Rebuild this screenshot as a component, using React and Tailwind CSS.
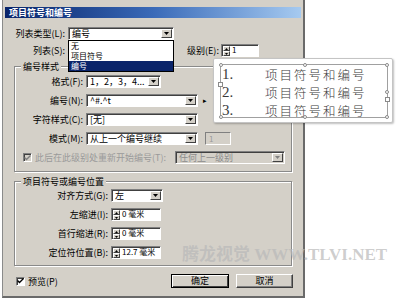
import React from 'react';

const FONT = { fontFamily: '"Noto Sans CJK SC", "Liberation Sans", sans-serif' };

function DropArrow({ disabled = false }) {
  return (
    <span className="flex w-[11px] shrink-0 items-center justify-center border border-t-white border-l-white border-r-[#404040] border-b-[#404040] bg-[#d4d0c8]">
      <svg width="5" height="3" viewBox="0 0 5 3">
        <path d="M0 0h5L2.5 3z" fill={disabled ? '#808080' : '#000'} />
      </svg>
    </span>
  );
}

function Select({ value, className = '', disabled = false }) {
  return (
    <div
      className={`flex h-[13px] items-stretch border border-t-[#808080] border-l-[#808080] border-b-white border-r-white shadow-[inset_1px_1px_0_#404040] ${
        disabled ? 'bg-[#d4d0c8] text-[#8c8c8c]' : 'bg-white text-black'
      } ${className}`}
    >
      <span className="flex-1 truncate pl-[3px] pt-[1px] text-[9px] leading-[10px]">{value}</span>
      <span className="flex py-[1px] pr-[1px]">
        <DropArrow disabled={disabled} />
      </span>
    </div>
  );
}

function SpinInput({ value, className = '' }) {
  return (
    <div
      className={`flex h-[13px] items-stretch bg-white border border-t-[#808080] border-l-[#808080] border-b-white border-r-white shadow-[inset_1px_1px_0_#404040] ${className}`}
    >
      <span className="ml-[1px] mt-[1px] flex w-[7px] flex-col bg-[#d4d0c8]">
        <span className="flex flex-1 items-center justify-center border border-t-white border-l-white border-r-[#404040] border-b-[#404040]">
          <svg width="3" height="2" viewBox="0 0 3 2"><path d="M1.5 0L3 2H0z" fill="#000" /></svg>
        </span>
        <span className="flex flex-1 items-center justify-center border border-t-white border-l-white border-r-[#404040] border-b-[#404040]">
          <svg width="3" height="2" viewBox="0 0 3 2"><path d="M0 0h3L1.5 2z" fill="#000" /></svg>
        </span>
      </span>
      <span className="flex-1 pl-[2px] text-[8px] leading-[10px] text-black">{value}</span>
    </div>
  );
}

function Label({ children, className = '', disabled = false }) {
  return (
    <span
      className={`shrink-0 whitespace-nowrap text-right text-[9px] leading-[13px] ${
        disabled ? 'text-[#9a9a9a]' : 'text-black'
      } ${className}`}
    >
      {children}
    </span>
  );
}

function Group({ title, className = '', children }) {
  return (
    <div
      className={`relative mx-[11px] border border-[#8a8a8a] shadow-[inset_1px_1px_0_#fff,1px_1px_0_#fff] ${className}`}
    >
      <span className="absolute -top-[6px] left-[6px] bg-[#d4d0c8] px-[2px] text-[9px] leading-[11px] text-black">
        {title}
      </span>
      {children}
    </div>
  );
}

function CheckBox({ checked, disabled = false }) {
  return (
    <span
      className={`flex h-[9px] w-[9px] items-center justify-center border border-t-[#808080] border-l-[#808080] border-b-white border-r-white shadow-[inset_1px_1px_0_#404040] ${
        disabled ? 'bg-[#d4d0c8]' : 'bg-white'
      }`}
    >
      {checked && (
        <svg width="7" height="6" viewBox="0 0 7 6">
          <path d="M0.5 2.5l2 2 4-4" stroke={disabled ? '#808080' : '#000'} strokeWidth="1.4" fill="none" />
        </svg>
      )}
    </span>
  );
}

function Handle({ className }) {
  return <span className={`absolute h-[4px] w-[4px] rounded-full border border-[#8a8a8a] bg-white ${className}`} />;
}

function Preview() {
  const lines = ['1.', '2.', '3.'];
  return (
    <div className="absolute left-[213px] top-[58px] h-[65px] w-[180px] rounded-[2px] border border-[#c4c4c4] bg-white shadow-[1px_1px_2px_rgba(0,0,0,0.25)]">
      <div className="relative ml-[6px] mt-[5px] h-[54px] w-[168px] border border-[#a0a0a0]">
        <Handle className="-left-[2px] -top-[2px]" />
        <Handle className="left-[82px] -top-[2px]" />
        <Handle className="-right-[2px] -top-[2px]" />
        <Handle className="-left-[2px] -bottom-[2px]" />
        <Handle className="left-[82px] -bottom-[2px]" />
        <Handle className="-right-[2px] -bottom-[2px]" />
        <Handle className="-right-[2px] top-[25px]" />
        <span className="absolute -left-[3px] top-[17px] h-[5px] w-[5px] border border-[#8a8a8a] bg-white" />
        <span className="absolute -right-[3px] top-[32px] h-[5px] w-[5px] border border-[#8a8a8a] bg-white" />
        <div className="flex flex-col pl-[1px]">
          {lines.map((n) => (
            <div key={n} className="flex h-[18px] items-center text-[#3a3a3a]">
              <span className="w-[43px] text-[15px] leading-[15px]" style={{ fontFamily: '"Liberation Serif", serif' }}>
                {n}
              </span>
              <span className="text-[12.5px] font-light leading-[15px] tracking-[2px]">项目符号和编号</span>
            </div>
          ))}
        </div>
      </div>
    </div>
  );
}

export default function App() {
  return (
    <div className="relative h-[302px] w-[400px] overflow-hidden bg-white" style={FONT}>
      <div className="ml-[2px] flex h-[298px] w-[303px] flex-col border-l border-r-2 border-b-2 border-l-[#8a8a8a] border-r-[#6a6a6a] border-b-[#6a6a6a] bg-[#d4d0c8]">
        {/* title bar */}
        <div className="mx-[2px] mt-[7px] flex h-[11px] items-center bg-gradient-to-r from-[#0a246a] via-[#3a6ab8] to-[#a6caf0] pl-[4px]">
          <span className="text-[9px] font-bold leading-[11px] text-white">项目符号和编号</span>
        </div>

        {/* list type */}
        <div className="mt-[9px] flex items-center">
          <Label className="w-[62px]">列表类型(L):</Label>
          <div className="relative ml-[3px]">
            <Select value="编号" className="w-[106px]" />
            <div className="absolute left-0 top-full z-10 flex w-[106px] flex-col border border-black bg-white text-[8px]">
              <span className="h-[10px] overflow-hidden pl-[2px] leading-[10px] text-black">无</span>
              <span className="h-[10px] overflow-hidden pl-[2px] leading-[10px] text-black">项目符号</span>
              <span className="h-[10px] overflow-hidden bg-[#0a246a] pl-[2px] leading-[10px] text-white">编号</span>
            </div>
          </div>
        </div>

        {/* list / level */}
        <div className="mt-[4px] flex items-center">
          <Label className="w-[62px]">列表(S):</Label>
          <Select value="" className="ml-[3px] w-[106px]" />
          <Label className="ml-[13px]">级别(E):</Label>
          <SpinInput value="1" className="ml-[2px] w-[38px]" />
        </div>

        {/* numbering style */}
        <Group title="编号样式" className="mt-[9px] h-[106px]">
          <div className="flex flex-col pt-[8px]">
            <div className="flex items-center">
              <Label className="w-[68px]">格式(F):</Label>
              <Select value="1，2，3，4..." className="ml-[3px] w-[75px]" />
            </div>
            <div className="mt-[6px] flex items-center">
              <Label className="w-[68px]">编号(N):</Label>
              <Select value="^#.^t" className="ml-[3px] w-[112px]" />
              <span className="ml-[5px] text-[7px] leading-[13px] text-black">▸</span>
            </div>
            <div className="mt-[6px] flex items-center">
              <Label className="w-[68px]">字符样式(C):</Label>
              <Select value="[无]" className="ml-[3px] w-[112px]" />
            </div>
            <div className="mt-[6px] flex items-center">
              <Label className="w-[68px]">模式(M):</Label>
              <Select value="从上一个编号继续" className="ml-[3px] w-[112px]" />
              <span className="ml-[7px] flex h-[13px] w-[26px] items-center border border-t-[#808080] border-l-[#808080] border-b-white border-r-white bg-[#d4d0c8] pl-[3px] text-[8px] text-[#9a9a9a]">
                1
              </span>
            </div>
            <div className="mt-[6px] flex items-center">
              <span className="ml-[8px]">
                <CheckBox checked disabled />
              </span>
              <Label disabled className="ml-[3px]">此后在此级别处重新开始编号(T):</Label>
              <Select disabled value="任何上一级别" className="ml-[9px] w-[110px]" />
            </div>
          </div>
        </Group>

        {/* position */}
        <Group title="项目符号或编号位置" className="mt-[9px] h-[85px]">
          <div className="flex flex-col pt-[7px]">
            <div className="flex items-center">
              <Label className="w-[93px]">对齐方式(G):</Label>
              <Select value="左" className="ml-[3px] w-[52px]" />
            </div>
            <div className="mt-[6px] flex items-center">
              <Label className="w-[93px]">左缩进(I):</Label>
              <SpinInput value="0 毫米" className="ml-[3px] w-[50px]" />
            </div>
            <div className="mt-[6px] flex items-center">
              <Label className="w-[93px]">首行缩进(R):</Label>
              <SpinInput value="0 毫米" className="ml-[3px] w-[50px]" />
            </div>
            <div className="mt-[6px] flex items-center">
              <Label className="w-[93px]">定位符位置(B):</Label>
              <SpinInput value="12.7 毫米" className="ml-[3px] w-[50px]" />
            </div>
          </div>
        </Group>

        {/* footer */}
        <div className="mt-[8px] flex items-center pl-[13px] pr-[10px]">
          <CheckBox checked />
          <Label className="ml-[3px]">预览(P)</Label>
          <div className="ml-auto flex gap-[7px]">
            <button
              type="button"
              className="h-[14px] w-[58px] border border-black bg-[#d4d0c8] text-[9px] leading-[10px] text-black shadow-[inset_1px_1px_0_#fff,inset_-1px_-1px_0_#404040]"
            >
              确定
            </button>
            <button
              type="button"
              className="h-[14px] w-[57px] border border-t-white border-l-white border-r-[#404040] border-b-[#404040] bg-[#d4d0c8] text-[9px] leading-[10px] text-black shadow-[inset_-1px_-1px_0_#808080]"
            >
              取消
            </button>
          </div>
        </div>
      </div>

      <Preview />

      <div
        className="pointer-events-none absolute left-[182px] top-[246px] whitespace-nowrap text-[17px] font-bold leading-[18px] text-[#b8b8b8]/70"
        style={{ fontFamily: '"Liberation Serif", "Noto Sans CJK SC", serif' }}
      >
        腾龙视觉 WWW.TLVI.NET
      </div>
    </div>
  );
}
